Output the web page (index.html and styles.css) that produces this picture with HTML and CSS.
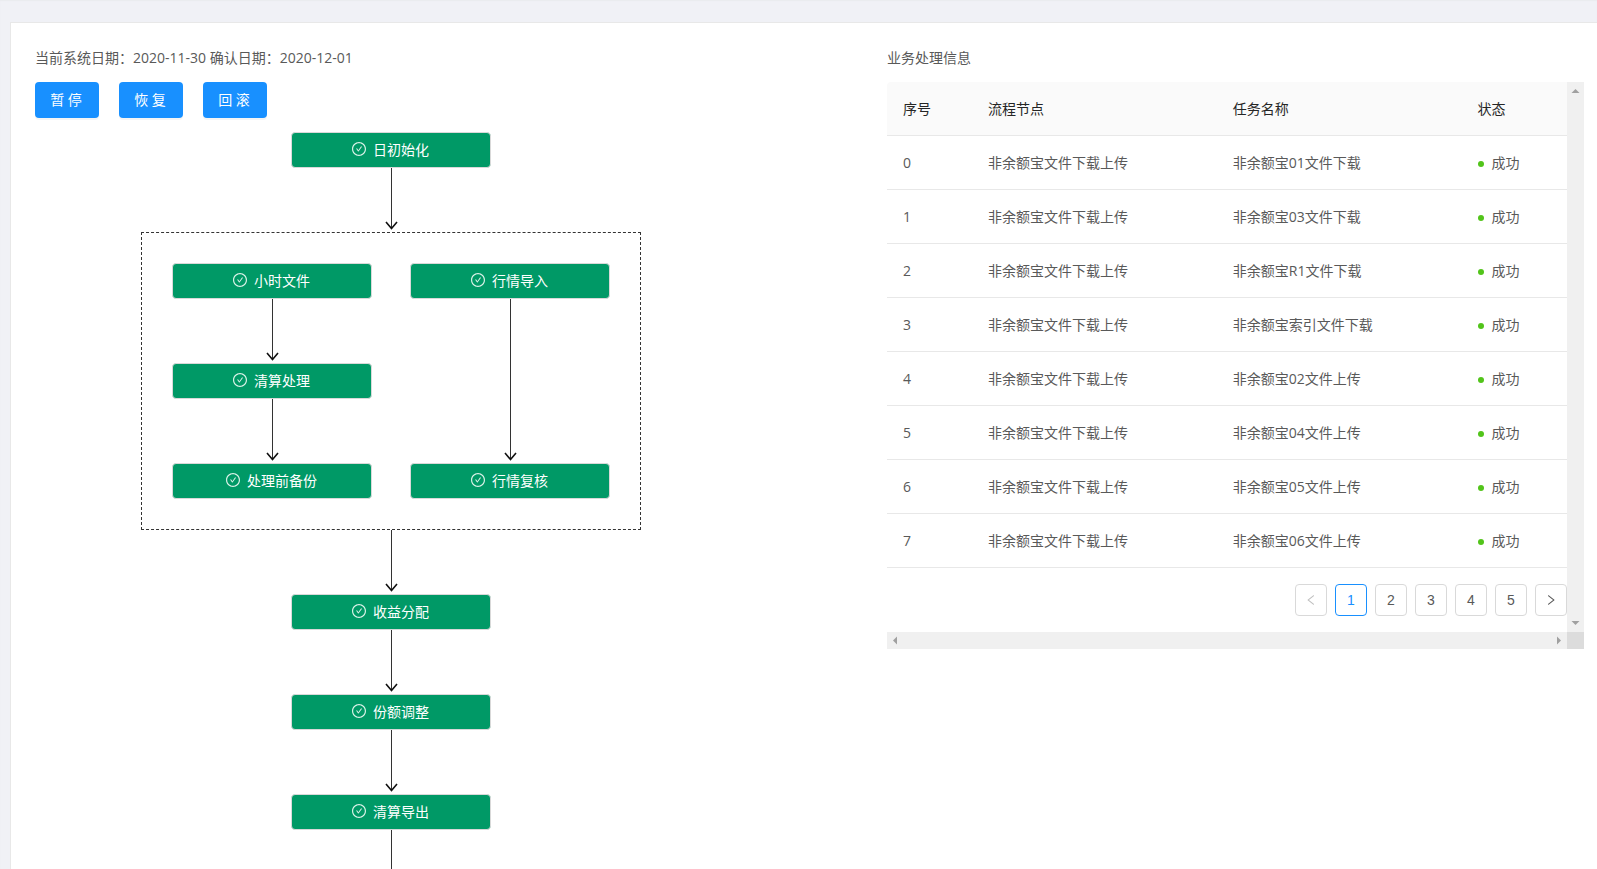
FILE: index.html
```html
<!DOCTYPE html>
<html lang="zh-CN">
<head>
<meta charset="utf-8">
<title>业务处理</title>
<link rel="stylesheet" href="styles.css">
</head>
<body>
<svg class="defs" aria-hidden="true">
  <symbol id="check" viewBox="64 64 896 896">
    <path d="M699 353h-46.9c-10.2 0-19.9 4.9-25.9 13.3L469 584.3l-71.2-98.8c-6-8.3-15.6-13.3-25.9-13.3H325c-6.5 0-10.3 7.4-6.5 12.7l124.6 172.8a31.8 31.8 0 0 0 51.7 0l210.6-292c3.9-5.3.1-12.7-6.4-12.7z"/>
    <path d="M512 64C264.6 64 64 264.6 64 512s200.6 448 448 448 448-200.6 448-448S759.4 64 512 64zm0 820c-205.4 0-372-166.6-372-372s166.6-372 372-372 372 166.6 372 372-166.6 372-372 372z"/>
  </symbol>
  <symbol id="head" viewBox="0 0 13 9">
    <path d="M1 1l5.500 6.500L12 1" fill="none" stroke="#111" stroke-width="1.600"/>
  </symbol>
  <symbol id="prev" viewBox="64 64 896 896">
    <path d="M724 218.300V141c0-6.700-7.700-10.400-12.900-6.300L260.300 486.800a31.860 31.860 0 0 0 0 50.300l450.800 352.100c5.300 4.100 12.900.4 12.900-6.300v-77.300c0-4.900-2.300-9.600-6.100-12.600l-360-281 360-281.100c3.800-3 6.100-7.700 6.100-12.600z"/>
  </symbol>
  <symbol id="next" viewBox="64 64 896 896">
    <path d="M765.700 486.800L314.900 134.700A7.970 7.970 0 0 0 302 141v77.300c0 4.900 2.300 9.600 6.100 12.600l360 281.100-360 281.100c-3.900 3-6.100 7.700-6.100 12.600V883c0 6.700 7.700 10.400 12.900 6.300l450.800-352.100a31.960 31.960 0 0 0 0-50.400z"/>
  </symbol>
</svg>

<main class="card">
  <section class="process">
    <p class="caption">当前系统日期：2020-11-30 确认日期：2020-12-01</p>
    <div class="actions">
      <button class="action" type="button">暂 停</button>
      <button class="action" type="button">恢 复</button>
      <button class="action" type="button">回 滚</button>
    </div>
    <div class="flow">
      <button class="node" type="button"><svg class="tick"><use href="#check"/></svg>日初始化</button>
      <div class="link"><svg class="tip"><use href="#head"/></svg></div>
      <div class="group">
        <div class="lane">
          <button class="node" type="button"><svg class="tick"><use href="#check"/></svg>小时文件</button>
          <div class="link"><svg class="tip"><use href="#head"/></svg></div>
          <button class="node" type="button"><svg class="tick"><use href="#check"/></svg>清算处理</button>
          <div class="link"><svg class="tip"><use href="#head"/></svg></div>
          <button class="node" type="button"><svg class="tick"><use href="#check"/></svg>处理前备份</button>
        </div>
        <div class="lane">
          <button class="node" type="button"><svg class="tick"><use href="#check"/></svg>行情导入</button>
          <div class="link link-grow"><svg class="tip"><use href="#head"/></svg></div>
          <button class="node" type="button"><svg class="tick"><use href="#check"/></svg>行情复核</button>
        </div>
      </div>
      <div class="link"><svg class="tip"><use href="#head"/></svg></div>
      <button class="node" type="button"><svg class="tick"><use href="#check"/></svg>收益分配</button>
      <div class="link"><svg class="tip"><use href="#head"/></svg></div>
      <button class="node" type="button"><svg class="tick"><use href="#check"/></svg>份额调整</button>
      <div class="link"><svg class="tip"><use href="#head"/></svg></div>
      <button class="node" type="button"><svg class="tick"><use href="#check"/></svg>清算导出</button>
      <div class="link"><svg class="tip"><use href="#head"/></svg></div>
    </div>
  </section>

  <section class="info">
    <h2 class="caption">业务处理信息</h2>
    <div class="scroller">
      <div class="view">
        <table class="tasks">
          <colgroup><col class="c-no"><col class="c-node"><col class="c-task"><col class="c-state"></colgroup>
          <thead><tr><th>序号</th><th>流程节点</th><th>任务名称</th><th>状态</th></tr></thead>
          <tbody>
            <tr><td>0</td><td>非余额宝文件下载上传</td><td>非余额宝01文件下载</td><td><span class="state">成功</span></td></tr>
            <tr><td>1</td><td>非余额宝文件下载上传</td><td>非余额宝03文件下载</td><td><span class="state">成功</span></td></tr>
            <tr><td>2</td><td>非余额宝文件下载上传</td><td>非余额宝R1文件下载</td><td><span class="state">成功</span></td></tr>
            <tr><td>3</td><td>非余额宝文件下载上传</td><td>非余额宝索引文件下载</td><td><span class="state">成功</span></td></tr>
            <tr><td>4</td><td>非余额宝文件下载上传</td><td>非余额宝02文件上传</td><td><span class="state">成功</span></td></tr>
            <tr><td>5</td><td>非余额宝文件下载上传</td><td>非余额宝04文件上传</td><td><span class="state">成功</span></td></tr>
            <tr><td>6</td><td>非余额宝文件下载上传</td><td>非余额宝05文件上传</td><td><span class="state">成功</span></td></tr>
            <tr><td>7</td><td>非余额宝文件下载上传</td><td>非余额宝06文件上传</td><td><span class="state">成功</span></td></tr>
          </tbody>
        </table>
        <nav class="pages" aria-label="分页">
          <button class="page" type="button" disabled aria-label="上一页"><svg class="chevron"><use href="#prev"/></svg></button>
          <button class="page page-current" type="button" aria-current="page">1</button>
          <button class="page" type="button">2</button>
          <button class="page" type="button">3</button>
          <button class="page" type="button">4</button>
          <button class="page" type="button">5</button>
          <button class="page" type="button" aria-label="下一页"><svg class="chevron"><use href="#next"/></svg></button>
        </nav>
      </div>
      <div class="bar bar-y" aria-hidden="true">
        <svg class="arrow" viewBox="0 0 17 17"><path d="M4.500 11L8.500 7L12.500 11z"/></svg>
        <svg class="arrow" viewBox="0 0 17 17"><path d="M4.500 6L8.500 10L12.500 6z"/></svg>
      </div>
      <div class="bar" aria-hidden="true">
        <svg class="arrow" viewBox="0 0 17 17"><path d="M10 4.500L6 8.500L10 12.500z"/></svg>
        <svg class="arrow" viewBox="0 0 17 17"><path d="M7 4.500L11 8.500L7 12.500z"/></svg>
      </div>
      <div class="corner"></div>
    </div>
  </section>
</main>
</body>
</html>
```
FILE: styles.css
```css
* { box-sizing: border-box; }

body {
  display: flex;
  height: 100vh;
  margin: 0;
  padding: 22px 0 0 10px;
  overflow: hidden;
  background: #f0f1f6;
  box-shadow: inset 0 1px 1px #e9ebef;
  color: #595959;
  font: 14px/21px "Open Sans", "Noto Sans CJK SC", sans-serif;
}

button { font: inherit; cursor: pointer; }
.defs { position: absolute; width: 0; height: 0; }

.card {
  flex: 1;
  display: grid;
  grid-template-columns: minmax(0, 1fr) 45%;
  column-gap: 140px;
  align-items: start;
  padding: 24px 13px 0 24px;
  border: solid #e8e8e8;
  border-width: 1px 0 0 1px;
  background: #fff;
}

.caption {
  margin: 0 0 14px;
  font-size: 14px;
  font-weight: 400;
}

.actions { display: flex; gap: 20px; margin-bottom: 14px; }
.action {
  width: 64px;
  height: 36px;
  padding: 0 2px 2px 0;
  border: 0;
  border-radius: 4px;
  background: #1890ff;
  box-shadow: 0 2px 0 rgba(0, 0, 0, .04);
  color: #fff;
}

.flow, .lane { display: flex; flex-direction: column; align-items: center; }
.node {
  display: flex;
  align-items: center;
  justify-content: center;
  gap: 7px;
  width: 200px;
  height: 36px;
  padding: 0 1px 2px 0;
  border: 1px solid #d9d9d9;
  border-radius: 4px;
  background: #009966;
  color: #fff;
}
.tick { width: 14px; height: 14px; fill: #d9f2e8; }

.link {
  display: flex;
  flex-direction: column;
  align-items: center;
  justify-content: flex-end;
  height: 64px;
  width: 13px;
  margin-left: 1px;
  padding-bottom: 2px;
  background: linear-gradient(#333, #333) center top / 1px calc(100% - 4px) no-repeat;
}
.link-grow { flex: 1; }
.tip { width: 13px; height: 9px; }

.group {
  display: flex;
  justify-content: space-between;
  width: 500px;
  padding: 30px;
  border: 1px dashed #333;
}

.scroller {
  display: grid;
  grid-template-columns: minmax(0, 1fr) 17px;
  grid-template-rows: auto 17px;
}
.tasks {
  width: 100%;
  table-layout: fixed;
  border-collapse: separate;
  border-spacing: 0;
}
.c-no { width: 12.5%; }
.c-node, .c-task { width: 36%; }
.c-state { width: 15.5%; }
.tasks th, .tasks td {
  padding: 16px;
  border-bottom: 1px solid #e8e8e8;
  font-weight: 400;
  text-align: left;
}
.tasks th { background: #fafafa; color: #262626; }
.tasks th:first-child { border-top-left-radius: 4px; }
.state { display: flex; align-items: center; gap: 8px; }
.state::before {
  content: "";
  width: 6px;
  height: 6px;
  margin-top: 2px;
  border-radius: 50%;
  background: #52c41a;
}

.pages { display: flex; justify-content: flex-end; gap: 8px; margin: 16px 0; }
.page {
  display: grid;
  place-items: center;
  width: 32px;
  height: 32px;
  padding: 0;
  border: 1px solid #d9d9d9;
  border-radius: 4px;
  background: #fff;
  color: #595959;
  font-family: "Liberation Sans", Arial, sans-serif;
}
.page:disabled { color: #bfbfbf; cursor: default; }
.page-current { border-color: #1890ff; color: #1890ff; }
.chevron { width: 12px; height: 12px; fill: currentColor; }

.bar { display: flex; justify-content: space-between; background: #f0f0f0; }
.bar-y { flex-direction: column; }
.arrow { width: 17px; height: 17px; fill: #a0a0a0; }
.corner { background: #dcdcdc; }
```
